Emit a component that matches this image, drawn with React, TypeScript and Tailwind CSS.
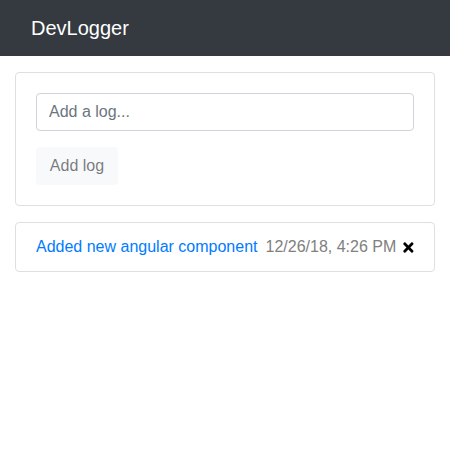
import React from "react";

const font = { fontFamily: '"Liberation Sans", Arial, sans-serif' };

export default function App() {
  return (
    <div className="min-h-[450px] bg-white text-[#212529]" style={font}>
      <nav className="h-14 bg-[#343a40] flex items-center px-4">
        <div className="px-[15px] text-[20px] text-white leading-[30px]">DevLogger</div>
      </nav>
      <div className="px-[15px] pt-4">
        <div className="border border-[#dfdfdf] rounded p-5">
          <input
            className="block w-full h-[38px] border border-[#ced4da] rounded px-3 text-base text-[#495057] placeholder:text-[#6c757d] outline-none"
            placeholder="Add a log..."
          />
          <button
            disabled
            className="mt-4 h-[38px] w-[82px] rounded bg-[#f8f9fa] text-base text-[#212529]/60"
          >
            Add log
          </button>
        </div>
        <ul className="mt-4">
          <li className="border border-[#dfdfdf] rounded px-5 py-3 flex items-center leading-6 text-base whitespace-nowrap">
            <a className="text-[#007bff]">Added new angular component</a>
            <span className="ml-2 text-[#808080]">12/26/18, 4:26 PM</span>
            <svg className="ml-[7px] w-[12px] h-[15px]" viewBox="0 0 352 512">
              <path
                fill="#000"
                d="M242.72 256l100.07-100.07c12.28-12.28 12.28-32.19 0-44.480l-22.24-22.24c-12.28-12.28-32.19-12.28-44.48 0L176 189.28 75.93 89.21c-12.28-12.28-32.19-12.28-44.48 0L9.21 111.45c-12.28 12.28-12.28 32.19 0 44.48L109.28 256 9.21 356.07c-12.28 12.28-12.28 32.19 0 44.48l22.24 22.24c12.28 12.28 32.2 12.28 44.48 0L176 322.72l100.07 100.07c12.28 12.28 32.2 12.28 44.48 0l22.24-22.24c12.28-12.28 12.28-32.19 0-44.48L242.72 256z"
              />
            </svg>
          </li>
        </ul>
      </div>
    </div>
  );
}
